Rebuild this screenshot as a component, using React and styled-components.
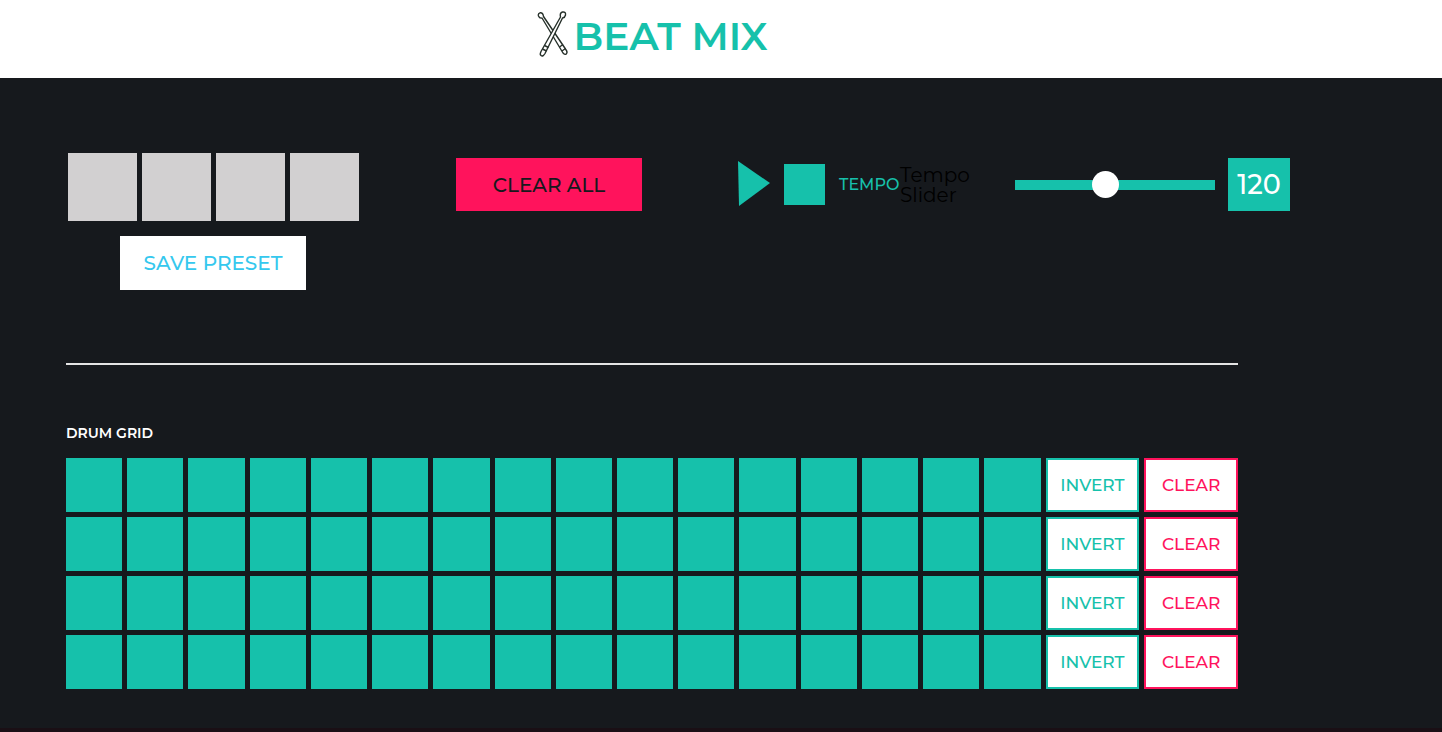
import React, { useState } from 'react';
import styled, { createGlobalStyle } from 'styled-components';

const teal = '#16c1ab';
const pink = '#ff135c';
const dark = '#16191d';

const GlobalStyle = createGlobalStyle`
  *, *::before, *::after {
    box-sizing: border-box;
  }

  body {
    margin: 0;
    background-color: #1a0f15;
    font-family: Montserrat, Inter, 'Open Sans', sans-serif;
  }
`;

const Wrap = styled.div`
  margin: 0 204px 0 66px;
`;

const Header = styled.header`
  height: 78px;
  background-color: #fff;
`;

const Brand = styled(Wrap)`
  display: flex;
  justify-content: center;
  gap: 5px;
  padding-top: 10px;
`;

const Title = styled.h1`
  margin: 0;
  color: ${teal};
  font-size: 39px;
  font-weight: 600;
  line-height: 52px;
`;

const Main = styled.main`
  padding: 75px 0 39px;
  background-color: ${dark};
`;

const Controls = styled.section`
  display: grid;
  grid-template-columns: 294px 186px max-content;
  column-gap: 96px;
  align-items: start;
`;

const PresetPanel = styled.div`
  display: flex;
  flex-direction: column;
  align-items: center;
  gap: 15px;
`;

const PresetRow = styled.div`
  display: flex;
  gap: 5px;
`;

const Preset = styled.button`
  width: 69px;
  height: 68px;
  padding: 0;
  border: 0;
  background-color: #d2d0d1;
`;

const BigButton = styled.button`
  width: 186px;
  height: 54px;
  padding: 0;
  border: 0;
  background-color: ${(props) => props.$bg};
  color: ${(props) => props.$color};
  font-family: inherit;
  font-size: 20px;
  font-weight: 500;
  white-space: nowrap;
`;

const MiddlePanel = styled.div`
  display: grid;
  height: 58px;
  padding-top: 5px;

  ${BigButton} {
    height: 53px;
  }
`;

const Transport = styled.div`
  display: flex;
  align-items: center;
  height: 53px;
  margin-top: 5px;
`;

const IconButton = styled.button`
  display: flex;
  margin-right: 14px;
  padding: 0;
  border: 0;
  background: none;
`;

const TempoTitle = styled.span`
  width: 61px;
  color: ${teal};
  font-size: 16px;
  font-weight: 500;
`;

const TempoLabel = styled.label`
  width: 115px;
  padding-right: 40px;
  color: #000;
  font-size: 20px;
  line-height: 20px;
`;

const Slider = styled.input`
  appearance: none;
  width: 200px;
  height: 10px;
  margin: 0 13px 0 0;
  background-color: ${teal};

  &::-webkit-slider-thumb {
    appearance: none;
    width: 27px;
    height: 27px;
    border-radius: 50%;
    background-color: #fff;
  }
`;

const TempoValue = styled.output`
  width: 62px;
  background-color: ${teal};
  color: #fff;
  font-size: 27px;
  font-weight: 500;
  line-height: 53px;
  text-align: center;
`;

const Divider = styled.hr`
  height: 2px;
  margin: 73px 0 0;
  border: 0;
  background-color: #e4e4e4;
`;

const GridTitle = styled.h2`
  margin: 58px 0 15px;
  color: #fff;
  font-size: 14px;
  font-weight: 600;
  line-height: 20px;
`;

const DrumGrid = styled.section`
  display: grid;
  grid-template-columns: repeat(16, minmax(0, 3fr)) repeat(2, minmax(0, 5fr));
  grid-auto-rows: 54px;
  gap: 5px;
`;

const Pad = styled.button`
  padding: 0;
  border: 0;
  background-color: ${(props) => (props.$on ? pink : teal)};
`;

const RowButton = styled.button`
  padding: 0;
  border: 2px solid ${(props) => props.$color};
  background-color: #fff;
  color: ${(props) => props.$color};
  font-family: inherit;
  font-size: 17px;
  font-weight: 500;
`;

const Sticks = () => (
  <svg width="32" height="48" viewBox="0 0 32 48" aria-hidden="true">
    <g fill="#fff" stroke="#26302a" strokeWidth="1.4" strokeLinejoin="round">
      <path d="M5 8 L26 43 Q29 46 30 42.500 Q30 41 28.500 39 L6.500 6.500 Q6 2.500 3 2.800 Q0.800 3.500 1.500 6 Q2.500 8.500 5 8 Z" />
      <path d="M25.500 8 L8 43.500 Q6 47 4 45.500 Q2.500 44.500 4 41.500 L23.500 7 Q22.500 3 25.500 2 Q29 1.500 28.500 5 Q28 7.500 25.500 8 Z" />
      <path d="M5.500 39 L9.500 41 M7.500 35.500 L11.500 37.500 M22.500 37 L26 34.500 M25 41 L28.500 38.500" />
    </g>
  </svg>
);

const steps = [...Array(16).keys()];

export default function App() {
  const [tempo, setTempo] = useState(120);
  const [rows, setRows] = useState(Array(4).fill(Array(16).fill(false)));

  const changeRow = (index, change) =>
    setRows(rows.map((row, i) => (i === index ? row.map(change) : row)));

  const clearAll = () => setRows(rows.map((row) => row.map(() => false)));

  return (
    <div>
      <GlobalStyle />
      <Header>
        <Brand>
          <Sticks />
          <Title>BEAT MIX</Title>
        </Brand>
      </Header>
      <Main>
        <Wrap>
          <Controls>
            <PresetPanel>
              <PresetRow>
                {[1, 2, 3, 4].map((n) => (
                  <Preset key={n} aria-label={`Preset ${n}`} />
                ))}
              </PresetRow>
              <BigButton $bg="#fff" $color="#35c8ee">
                SAVE PRESET
              </BigButton>
            </PresetPanel>
            <MiddlePanel>
              <BigButton $bg={pink} $color={dark} onClick={clearAll}>
                CLEAR ALL
              </BigButton>
            </MiddlePanel>
            <Transport>
              <IconButton aria-label="Play">
                <svg width="32" height="48" viewBox="0 0 32 48">
                  <path d="M0 0 L32 22 L1 45 Z" fill={teal} />
                </svg>
              </IconButton>
              <IconButton aria-label="Stop">
                <svg width="41" height="41">
                  <rect width="41" height="41" fill={teal} />
                </svg>
              </IconButton>
              <TempoTitle>TEMPO</TempoTitle>
              <TempoLabel htmlFor="tempo">Tempo Slider</TempoLabel>
              <Slider
                id="tempo"
                type="range"
                min="40"
                max="220"
                value={tempo}
                onChange={(e) => setTempo(Number(e.target.value))}
              />
              <TempoValue htmlFor="tempo">{tempo}</TempoValue>
            </Transport>
          </Controls>

          <Divider />

          <GridTitle>DRUM GRID</GridTitle>
          <DrumGrid>
            {rows.map((row, r) => (
              <React.Fragment key={r}>
                {steps.map((s) => (
                  <Pad
                    key={s}
                    $on={row[s]}
                    aria-label={`Row ${r + 1} step ${s + 1}`}
                    onClick={() => changeRow(r, (on, i) => (i === s ? !on : on))}
                  />
                ))}
                <RowButton $color={teal} onClick={() => changeRow(r, (on) => !on)}>
                  INVERT
                </RowButton>
                <RowButton $color={pink} onClick={() => changeRow(r, () => false)}>
                  CLEAR
                </RowButton>
              </React.Fragment>
            ))}
          </DrumGrid>
        </Wrap>
      </Main>
    </div>
  );
}
